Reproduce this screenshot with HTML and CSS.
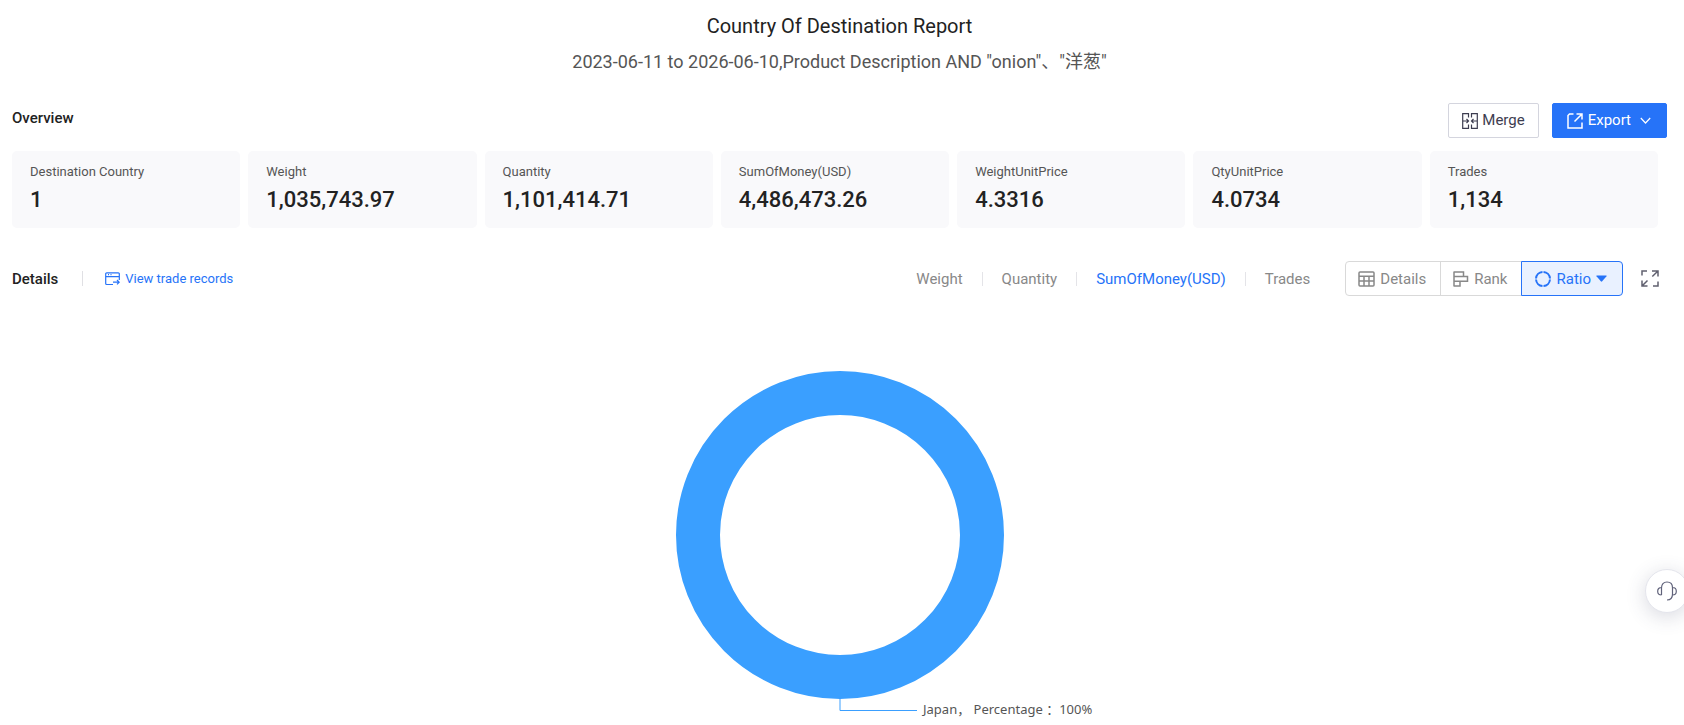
FILE: index.html
```html
<!DOCTYPE html>
<html lang="en">
<head>
<meta charset="utf-8">
<title>Country Of Destination Report</title>
<link rel="stylesheet" href="styles.css">
</head>
<body>
<main class="report">
  <header class="report-head">
    <h1 class="report-title">Country Of Destination Report</h1>
    <p class="report-query">2023-06-11 to 2026-06-10,Product Description AND "onion"、"洋葱"</p>
  </header>

  <section class="overview">
    <div class="overview-bar">
      <h2 class="section-title">Overview</h2>
      <div class="actions">
        <button class="btn" type="button">
          <svg class="icon" width="16" height="16" viewBox="0 0 16 16"><path d="M6.500 4.500V.7H.7v14.600h5.800v-3.800M9.500 4.500V.7h5.800v14.600H9.500v-3.800M.7 8h5.500M4.500 6l2 2-2 2M15.300 8H9.800M11.500 6l-2 2 2 2"/></svg>
          <span>Merge</span>
        </button>
        <button class="btn btn-primary" type="button">
          <svg class="icon icon-bold" width="16" height="16" viewBox="0 0 16 16"><path d="M6.500 1H2.500L1 2.500V15h14V9.500M9.500 1H15v5.500M15 1L7.500 8.500"/></svg>
          <span>Export</span>
          <svg class="icon chevron" width="11" height="11" viewBox="0 0 11 11"><path d="M.8 3l4.700 5 4.700-5"/></svg>
        </button>
      </div>
    </div>
    <dl class="cards">
      <div class="card"><dt>Destination Country</dt><dd>1</dd></div>
      <div class="card"><dt>Weight</dt><dd>1,035,743.97</dd></div>
      <div class="card"><dt>Quantity</dt><dd>1,101,414.71</dd></div>
      <div class="card"><dt>SumOfMoney(USD)</dt><dd>4,486,473.26</dd></div>
      <div class="card"><dt>WeightUnitPrice</dt><dd>4.3316</dd></div>
      <div class="card"><dt>QtyUnitPrice</dt><dd>4.0734</dd></div>
      <div class="card"><dt>Trades</dt><dd>1,134</dd></div>
    </dl>
  </section>

  <section class="details">
    <div class="details-bar">
      <h2 class="section-title">Details</h2>
      <a class="records-link" href="#records">
        <svg class="icon" width="15" height="14" viewBox="0 0 15 14"><path d="M14.300 8V1.800a1 1 0 0 0-1-1H1.700a1 1 0 0 0-1 1v9.700a1 1 0 0 0 1 1H8M.7 4.600h13.600M3 2.700h1M5.500 2.700h1M8 10.200h6M12 8l2.200 2.200L12 12.400"/></svg>
        <span>View trade records</span>
      </a>
      <nav class="metrics">
        <button class="metric" type="button">Weight</button>
        <button class="metric" type="button">Quantity</button>
        <button class="metric is-active" type="button">SumOfMoney(USD)</button>
        <button class="metric" type="button">Trades</button>
      </nav>
      <div class="views">
        <button class="view" type="button">
          <svg class="icon icon-bold" width="17" height="16" viewBox="0 0 17 16"><rect x="1" y="1" width="15" height="14" rx="1"/><path d="M1 5.300h15M1 10h15M6 5.300V15M11 5.300V15"/></svg>
          <span>Details</span>
        </button>
        <button class="view" type="button">
          <svg class="icon icon-bold" width="16" height="16" viewBox="0 0 16 16"><path d="M1 .5v15M1 1h9.500v4.500H1M1 5.500h13.500v4.800H1M1 10.300h6V15H1"/></svg>
          <span>Rank</span>
        </button>
        <button class="view is-active" type="button">
          <svg class="icon" width="16" height="16" viewBox="0 0 16 16"><circle class="dial" cx="8" cy="8" r="7" pathLength="80"/></svg>
          <span>Ratio</span>
          <svg width="11" height="7" viewBox="0 0 11 7"><path fill="currentColor" d="M.8.500h9.400q.8 0 .3.700L6.200 6.300q-.7.700-1.400 0L.5 1.200Q0 .5.800.5z"/></svg>
        </button>
      </div>
      <button class="fullscreen" type="button" aria-label="Full screen">
        <svg class="icon icon-bold" width="18" height="17" viewBox="0 0 18 17"><path d="M6 1H1v4.500M11 1h6v5.500M17 1l-5.700 5.500M1 10.500V16h5.500M1 16l5.500-5.500M17 11.500V16h-5"/></svg>
      </button>
    </div>
    <svg class="chart" width="600" height="400" viewBox="-300 -200 600 400" role="img" aria-label="Japan 100%">
      <circle class="ring" r="142"/>
      <path class="leader" d="M0 164v11.500H77"/>
      <text class="chart-label" x="83" y="179">Japan， Percentage ：100%</text>
    </svg>
  </section>
</main>
<button class="support" type="button" aria-label="Support">
  <svg class="icon" width="20" height="20" viewBox="0 0 20 20"><path d="M4.500 14V6.800C4.500 3.500 6.500 1 10 1s5.500 2.500 5.500 5.800V13c0 4-1.500 6-5.500 6M4.500 6.500C2 6.500.7 8 .7 10.200S2 14 4.500 14M15.500 6.500c2.500 0 3.800 1.500 3.800 3.700S18 14 15.500 14"/></svg>
</button>
</body>
</html>
```

FILE: styles.css
```css
* {
  box-sizing: border-box;
}

body {
  margin: 0;
  background: #fff;
  color: #222;
  font-family: Roboto, "Noto Sans CJK SC", sans-serif;
  font-size: 15px;
  line-height: 20px;
  overflow: hidden;
}

h1, h2, p, dl, dd {
  margin: 0;
}

button {
  font: inherit;
  cursor: pointer;
}

.icon {
  flex: none;
  fill: none;
  stroke: currentColor;
  stroke-width: 1.2;
}

.icon-bold {
  stroke-width: 1.5;
}

.report {
  padding: 12px 17px 0 12px;
}

.report-head {
  text-align: center;
}

.report-title {
  font-size: 20px;
  font-weight: 400;
  line-height: 28px;
}

.report-query {
  margin-top: 8px;
  color: #555;
  font-size: 18px;
  line-height: 28px;
}

.section-title {
  font-size: 15px;
  font-weight: 500;
}

.overview-bar {
  display: flex;
  justify-content: space-between;
  align-items: flex-start;
  margin-top: 27px;
}

.overview-bar .section-title {
  padding-top: 5px;
}

.actions {
  display: flex;
  gap: 13px;
}

.btn {
  display: flex;
  align-items: center;
  gap: 4px;
  height: 35px;
  padding: 0 13px;
  border: 1px solid #d4d5de;
  border-radius: 2px;
  background: #fff;
  color: #3d3d50;
}

.btn span {
  padding-bottom: 1px;
}

.btn-primary {
  gap: 5px;
  padding: 0 15px 0 14px;
  border-color: #2673f8;
  background: #2673f8;
  color: #fff;
}

.chevron {
  margin-left: 4px;
}

.cards {
  display: grid;
  grid-template-columns: repeat(7, 1fr);
  gap: 8px;
  margin: 13px 9px 0 0;
}

.card {
  padding: 12px 18px 14px;
  border-radius: 5px;
  background: #f9f9fb;
}

.card dt {
  color: #555;
  font-size: 13px;
  line-height: 18px;
}

.card dd {
  margin-top: 5px;
  font-size: 22px;
  font-weight: 500;
  line-height: 28px;
}

.details-bar {
  display: flex;
  align-items: center;
  margin-top: 33px;
}

.records-link {
  display: flex;
  align-items: center;
  gap: 5px;
  margin-left: 24px;
  padding-left: 22px;
  border-left: 1px solid #e0e0e4;
  color: #2673f8;
  font-size: 13px;
  line-height: 15px;
  text-decoration: none;
}

.metrics {
  display: flex;
  align-items: center;
  margin-left: auto;
}

.metric {
  padding: 0 19px;
  border: 0;
  background: none;
  color: #888;
  line-height: 14px;
}

.metric + .metric {
  border-left: 1px solid #e4e4e8;
}

.views {
  display: flex;
  margin-left: 16px;
}

.view {
  display: flex;
  align-items: center;
  gap: 5px;
  height: 35px;
  padding: 0 14px 0 12px;
  border: 1px solid #d9d9d9;
  background: #fff;
  color: #888;
}

.view + .view {
  margin-left: -1px;
}

.view:first-child {
  border-radius: 4px 0 0 4px;
}

.view:last-child {
  border-radius: 0 4px 4px 0;
}

.metric.is-active {
  color: #2673f8;
}

.view.is-active {
  padding: 0 15px 0 13px;
  border-color: #2673f8;
  background: #e9f1ff;
  color: #2673f8;
}

.dial {
  stroke-width: 2;
  stroke-dasharray: 18 2;
  stroke-dashoffset: -1;
}

.fullscreen {
  display: flex;
  margin: 0 8px 0 18px;
  padding: 0;
  border: 0;
  background: none;
  color: #60606f;
}

.chart {
  display: block;
  margin: 39px auto 0;
}

.ring {
  fill: none;
  stroke: #3a9fff;
  stroke-width: 44;
}

.leader {
  fill: none;
  stroke: #3a9fff;
}

.chart-label {
  fill: #555;
  font-family: "Noto Sans", "Noto Sans CJK SC", sans-serif;
  font-size: 13px;
}

.support {
  position: fixed;
  right: -5px;
  bottom: 112px;
  display: flex;
  align-items: center;
  justify-content: center;
  width: 44px;
  height: 44px;
  padding: 0;
  border: 1px solid #e4e5ec;
  border-radius: 50%;
  background: #fff;
  box-shadow: 0 4px 20px rgba(60, 65, 100, 0.2);
  color: #60627a;
}
```
